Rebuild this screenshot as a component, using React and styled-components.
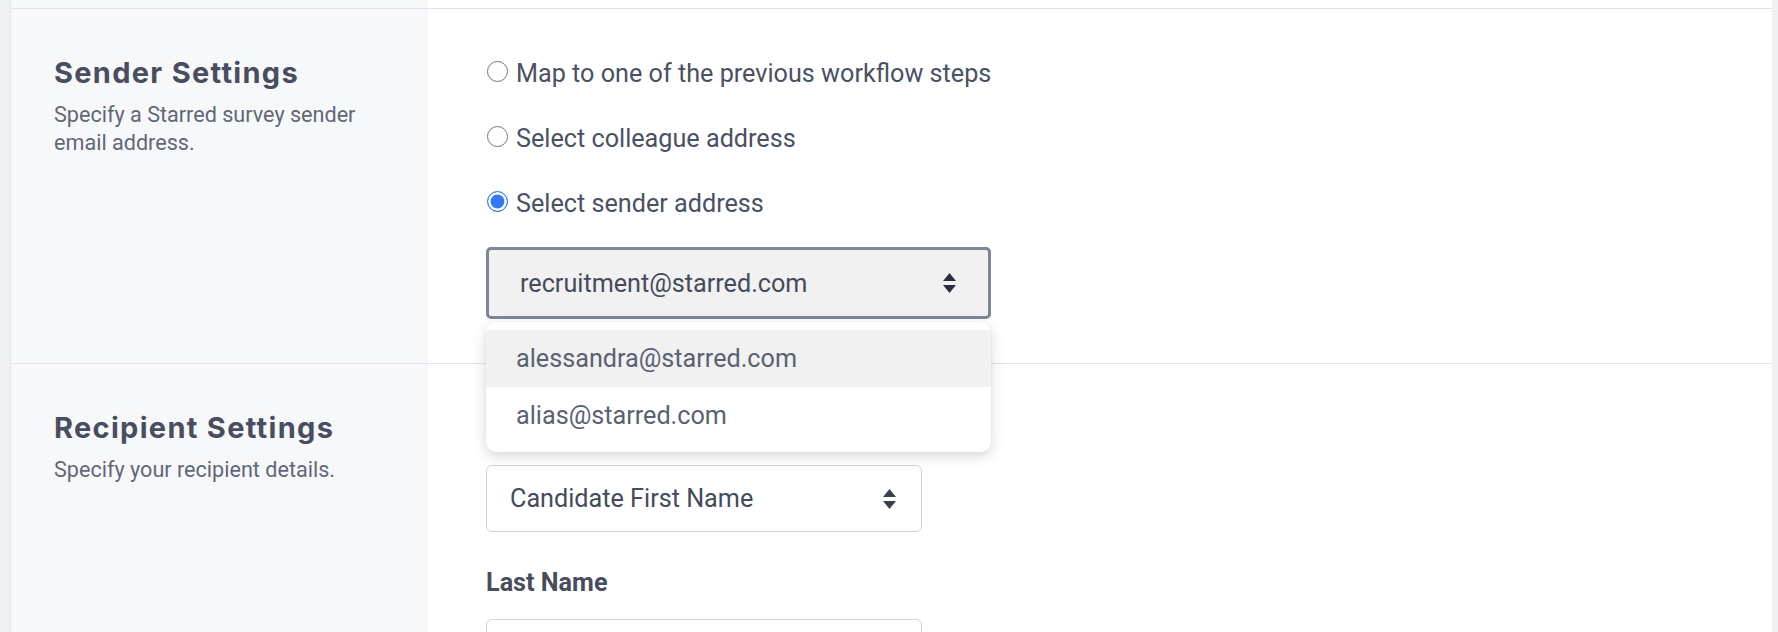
import React from 'react';
import styled, { createGlobalStyle } from 'styled-components';

const Global = createGlobalStyle`
  html, body { margin: 0; padding: 0; }
  body {
    background: #eef0f3;
    font-family: Roboto, "Liberation Sans", Arial, sans-serif;
    -webkit-font-smoothing: antialiased;
  }
`;

const Page = styled.div`
  height: 632px;
  overflow: hidden;
  display: flex;
  padding: 0 6px 0 10px;
`;

const Sheet = styled.div`
  flex: 1;
  background: #fff;
  border-left: 1px solid #e2e4e9;
  display: flex;
  flex-direction: column;
`;

const Section = styled.section`
  display: grid;
  grid-template-columns: 417px 1fr;
  border-top: ${p => (p.$first ? 'none' : '1px solid #e3e2ec')};
  height: ${p => p.$height || 'auto'};
  flex: ${p => (p.$grow ? 1 : 'none')};
`;

const Aside = styled.div`
  background: #f7f8fa;
  padding: 46px 20px 0 43px;
`;

const Heading = styled.h2`
  margin: 0 0 11px;
  font-family: Inter, "Open Sans", sans-serif;
  font-weight: 700;
  font-size: 29px;
  line-height: 35px;
  letter-spacing: 1.3px;
  color: #484e60;
`;

const Hint = styled.p`
  margin: 0;
  font-size: 21.6px;
  line-height: 28px;
  color: #606878;
  max-width: 310px;
`;

const Main = styled.div`
  padding: ${p => p.$pad || '50px 0 44px 58px'};
  display: flex;
  flex-direction: column;
`;

const Options = styled.div`
  display: flex;
  flex-direction: column;
  gap: 35px;
  margin-bottom: 28px;
`;

const Option = styled.label`
  display: flex;
  align-items: center;
  gap: 8px;
  font-size: 25.2px;
  line-height: 30px;
  color: #4a5163;
`;

const Radio = styled.span`
  box-sizing: border-box;
  flex: none;
  width: 21px;
  height: 21px;
  margin-left: 1px;
  margin-top: -5px;
  border-radius: 50%;
  border: 1.6px solid ${p => (p.$checked ? '#3478f6' : '#767676')};
  background: ${p => (p.$checked ? '#3478f6' : '#fff')};
  box-shadow: ${p => (p.$checked ? 'inset 0 0 0 2.6px #fff' : 'none')};
`;

const SelectWrap = styled.div`
  position: relative;
  width: ${p => p.$width};
`;

const Select = styled.div`
  box-sizing: border-box;
  height: ${p => (p.$open ? '72px' : '67px')};
  display: flex;
  align-items: center;
  justify-content: space-between;
  padding: ${p => (p.$open ? '0 32px 0 31px' : '0 25px 0 23px')};
  border: ${p => (p.$open ? '3px solid #7e8696' : '1px solid #cfd3da')};
  border-radius: ${p => (p.$open ? '5px' : '6px')};
  background: ${p => (p.$open ? '#f1f1f1' : '#fff')};
  font-size: 25.2px;
  color: #454b5a;
`;

const Menu = styled.ul`
  position: absolute;
  top: calc(100% + 3px);
  left: 0;
  right: 0;
  margin: 0;
  padding: 8px 0;
  list-style: none;
  background: #fff;
  border-radius: 10px;
  box-shadow: 0 4px 14px rgba(0, 0, 0, 0.16), 0 0 2px rgba(0, 0, 0, 0.05);
  z-index: 5;
`;

const MenuItem = styled.li`
  height: 57px;
  display: flex;
  align-items: center;
  padding-left: 30px;
  font-size: 25.2px;
  color: #5a6172;
  background: ${p => (p.$active ? '#f1f1f1' : 'transparent')};
`;

const Field = styled.div`
  display: flex;
  flex-direction: column;
  margin-bottom: 36px;
`;

const Label = styled.div`
  font-size: 25.2px;
  line-height: 30px;
  font-weight: 700;
  color: #474d5d;
  margin-bottom: 21px;
`;

const Sorter = ({ color = '#2b3040' }) => (
  <svg width="13" height="20" viewBox="0 0 13 20" fill={color}>
    <path d="M6.5 0 L13 8 H0 Z" />
    <path d="M0 12 H13 L6.5 20 Z" />
  </svg>
);

export default function App() {
  return (
    <>
      <Global />
      <Page>
        <Sheet>
          <Section $first $height="8px">
            <Aside style={{ padding: 0 }} />
            <div />
          </Section>

          <Section>
            <Aside>
              <Heading>Sender Settings</Heading>
              <Hint>Specify a Starred survey sender email address.</Hint>
            </Aside>
            <Main>
              <Options>
                <Option><Radio />Map to one of the previous workflow steps</Option>
                <Option><Radio />Select colleague address</Option>
                <Option><Radio $checked />Select sender address</Option>
              </Options>
              <SelectWrap $width="505px">
                <Select $open>
                  <span>recruitment@starred.com</span>
                  <Sorter />
                </Select>
                <Menu>
                  <MenuItem $active>alessandra@starred.com</MenuItem>
                  <MenuItem>alias@starred.com</MenuItem>
                </Menu>
              </SelectWrap>
            </Main>
          </Section>

          <Section $grow>
            <Aside>
              <Heading>Recipient Settings</Heading>
              <Hint>Specify your recipient details.</Hint>
            </Aside>
            <Main $pad="50px 0 0 58px">
              <Field>
                <Label>First Name</Label>
                <SelectWrap $width="436px">
                  <Select>
                    <span>Candidate First Name</span>
                    <Sorter color="#3a3f4d" />
                  </Select>
                </SelectWrap>
              </Field>
              <Field>
                <Label>Last Name</Label>
                <SelectWrap $width="436px">
                  <Select>
                    <span>Candidate Last Name</span>
                    <Sorter color="#3a3f4d" />
                  </Select>
                </SelectWrap>
              </Field>
            </Main>
          </Section>
        </Sheet>
      </Page>
    </>
  );
}
